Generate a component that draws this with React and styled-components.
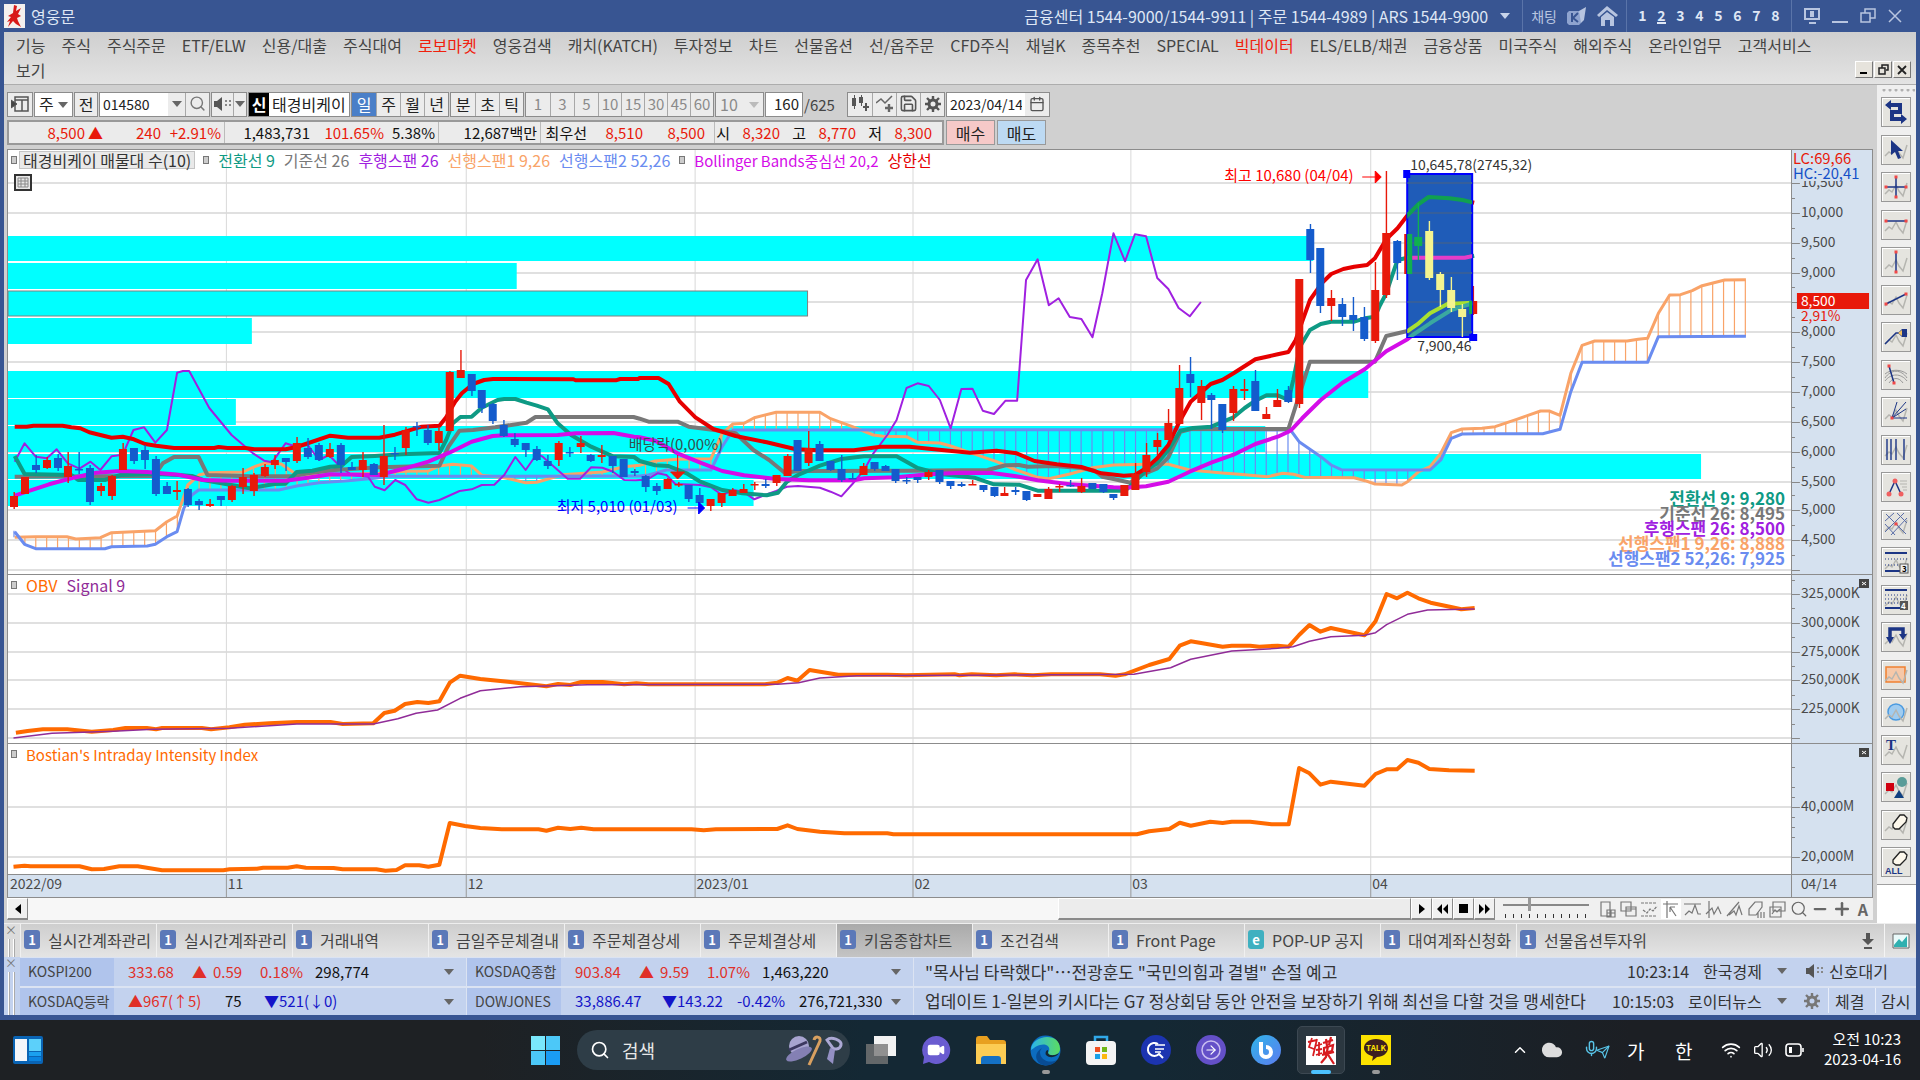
import styled, { createGlobalStyle } from "styled-components"
import { Search, Settings, Save, Calendar, Wifi, Volume2, ChevronUp, Send, Mic, Cloud, Video, ArrowRight, Minus, Plus } from "lucide-react"

const GlobalStyle = createGlobalStyle`
    *{
        box-sizing: border-box;
    }
    body{
        margin: 0;
        background: #385592;
        font-family: "Noto Sans CJK KR", sans-serif;
        font-size: 16px;
        line-height: 1;
        color: #222;
        white-space: nowrap;
    }
    button, input, select{
        font: inherit;
        color: inherit;
        margin: 0;
        padding: 0;
        border: 0;
        border-radius: 0;
        background: none;
        appearance: none;
    }
    a{
        color: inherit;
        text-decoration: none;
    }
    svg{
        display: block;
        flex: none;
    }
`
const Screen = styled.div`
    min-height: 100vh;
    display: flex;
    flex-direction: column;
    overflow: hidden;
`
const AppWindow = styled.div`
    flex: 1;
    display: flex;
    flex-direction: column;
    border: solid #385592;
    border-width: 0 4px 5px;
`

/* title bar */
const TitleBar = styled.header`
    display: flex;
    align-items: center;
    height: 32px;
    padding: 0 2px 0 0;
    background: #385592;
    color: #dfe7f5;
`
const AppName = styled.h1`
    margin: 0;
    padding-left: 6px;
    font-size: 16px;
    font-weight: 400;
    flex: 1;
`
const TitleGroup = styled.div`
    display: flex;
    align-items: center;
    gap: ${p => p.$gap || 12}px;
    height: 32px;
    padding: 0 ${p => p.$pad || 12}px;
    border-left: 1px solid ${p => p.$plain ? "transparent" : "#5a74a9"};
    color: ${p => p.$dim ? "#b8c5e0" : "#dfe7f5"};
    font-size: ${p => p.$small ? 14 : 16}px;
`
const ScreenNo = styled.button`
    width: 9px;
    font-size: 14px;
    font-weight: 700;
    border-bottom: 2px solid ${p => p.$on ? "#dfe7f5" : "transparent"};
`

/* menu */
const MenuBar = styled.nav`
    height: 53px;
    background: linear-gradient(#cfcfcf, #e3e3e3);
    border-bottom: 1px solid #adadad;
    padding: 5px 5px 0 12px;
    color: #444;
`
const MenuLine = styled.div`
    display: flex;
    align-items: center;
    gap: 16px;
    height: ${p => p.$last ? 21 : 16}px;
    & + &{
        margin-top: 6px;
    }
`
const MenuLink = styled.a`
    color: ${p => p.$hot ? "#f0200c" : "#444"};
`
const MdiButtons = styled.div`
    display: flex;
    margin-left: auto;
    gap: 1px;
`
const MdiButton = styled.button`
    width: 18px;
    height: 17px;
    display: grid;
    place-items: center;
    background: #e6e3dc;
    border: 1px solid;
    border-color: #fff #777 #777 #fff;
`

/* work area */
const Work = styled.div`
    display: flex;
    height: 838px;
    background: #d0d0d0;
`
const Main = styled.main`
    flex: 1;
    min-width: 0;
    display: flex;
    flex-direction: column;
    padding-left: 3px;
`
const Bar = styled.div`
    display: flex;
    align-items: stretch;
    height: 25px;
    margin-top: ${p => p.$top}px;
    gap: ${p => p.$gap || 1}px;
`
const Group = styled.div`
    display: flex;
    border: 1px solid #8c8c8c;
    background: #ececec;
`
const ToolButton = styled.button`
    display: grid;
    place-items: center;
    width: ${p => p.$w || 24}px;
    padding-bottom: 2px;
    background: ${p => p.$on ? "#4a7fc8" : "#ececec"};
    color: ${p => p.$on ? "#fff" : p.$off ? "#8a8a8a" : "#222"};
    font-size: ${p => p.$off ? 15 : 16}px;
    & + &{
        border-left: 1px solid #a8a8a8;
    }
`
const Field = styled.input`
    width: ${p => p.$w}px;
    background: #fff;
    padding: 0 3px 2px;
    font-size: ${p => p.$small ? 14 : 15}px;
    text-align: ${p => p.$right ? "right" : "left"};
`
const Pick = styled.select`
    width: ${p => p.$w}px;
    padding: 0 4px 2px;
    background: ${p => p.$off ? "#ececec" : "#fff"};
    color: ${p => p.$off ? "#8a8a8a" : "#222"};
`
const PickWrap = styled.span`
    position: relative;
    display: flex;
    &>svg{
        position: absolute;
        right: 4px;
        top: 9px;
    }
`
const Badge = styled.span`
    display: grid;
    place-items: center;
    width: 20px;
    padding-bottom: 2px;
    background: #000;
    color: #fff;
    font-weight: 700;
`
const StockName = styled.span`
    display: flex;
    align-items: center;
    width: 80px;
    padding: 0 0 2px 3px;
    background: #fff;
    overflow: hidden;
`
const Total = styled.span`
    align-self: center;
    width: 42px;
    font-size: 15px;
    color: #444;
`
const QuoteBox = styled.div`
    display: flex;
    width: 937px;
    border: 2px solid #999;
    background: #ebebeb;
    font-size: 15px;
`
const QuoteCell = styled.div`
    display: flex;
    align-items: center;
    justify-content: flex-end;
    width: ${p => p.$w}px;
    padding-right: ${p => p.$pr || 3}px;
    & + &{
        border-left: 1px solid #bbb;
    }
`
const Num = styled.span`
    width: ${p => p.$w}px;
    text-align: right;
    color: ${p => p.$c || "#111"};
`
const OrderButton = styled.button`
    width: 49px;
    background: ${p => p.$sell ? "#bddaf3" : "#f6c9c8"};
    border: 1px solid #999;
`

/* chart */
const ChartFrame = styled.section`
    margin: 4px 4px 0 0;
    border: 1px solid #8c8c8c;
    background: #fff;
`
const Pane = styled.div`
    position: relative;
    display: flex;
    height: ${p => p.$h}px;
    & + &{
        border-top: 1px solid #8c8c8c;
    }
`
const Plot = styled.svg`
    flex: 1;
    min-width: 0;
    height: 100%;
    overflow: visible;
`
const Axis = styled.svg`
    width: 81px;
    height: 100%;
    overflow: visible;
    background: #d5e1ef;
    border-left: 1px solid #8c8c8c;
    font-size: 14px;
    fill: #4a4a4a;
`
const Legend = styled.div`
    position: absolute;
    left: 3px;
    top: 1px;
    height: 18px;
    display: flex;
    align-items: center;
    gap: 9px;
`
const LegendItem = styled.span`
    color: ${p => p.$c};
    font-size: ${p => p.$small ? 15 : 16}px;
    padding: ${p => p.$boxed ? "0 3px" : 0};
    margin-left: ${p => p.$boxed ? -6 : 0}px;
    background: ${p => p.$boxed ? "#e9e9e9" : "none"};
    box-shadow: ${p => p.$boxed ? "0 0 0 1px #c4c4c4" : "none"};
`
const Dot = styled.i`
    width: 6px;
    height: 8px;
    border: 1px solid #777;
    background: #ccc;
`
const GridToggle = styled.button`
    position: absolute;
    left: 6px;
    top: 24px;
    width: 18px;
    height: 17px;
    border: 2px solid #333;
    background: #e8e8e8;
    padding: 1px;
`
const ClosePane = styled.button`
    position: absolute;
    right: 3px;
    top: 4px;
    width: 10px;
    height: 9px;
    background: #444;
`
const DateRow = styled(Pane)`
    background: #d5e1ef;
    font-size: 14px;
`

/* scroll row */
const ScrollRow = styled.div`
    display: flex;
    height: 22px;
    margin-right: 4px;
    background: #f0f0f0;
`
const Track = styled.div`
    flex: 1;
    display: flex;
    justify-content: flex-end;
    background: #f7f7f7;
`
const Thumb = styled.div`
    width: 353px;
    background: #ececec;
    border: 1px solid;
    border-color: #fff #8a8a8a #8a8a8a #fff;
    border-bottom-width: 2px;
`
const PlayButton = styled.button`
    width: 21px;
    display: grid;
    place-items: center;
    background: #f0f0f0;
    border: 1px solid;
    border-color: #fff #8a8a8a #8a8a8a #fff;
    border-bottom-width: 2px;
`
const Speed = styled.input.attrs({ type: "range" })`
    width: 86px;
    height: 20px;
    margin: 0 8px;
    background: linear-gradient(#888, #888) no-repeat 0 6px / 100% 2px,
        repeating-linear-gradient(90deg, #333 0 1px, transparent 1px 8px) no-repeat 2px 16px / 100% 4px;
    &::-webkit-slider-thumb{
        appearance: none;
        width: 3px;
        height: 13px;
        margin-top: -7px;
        background: #999;
    }
`
const ChartTools = styled.div`
    display: flex;
    align-items: center;
    justify-content: space-between;
    width: 276px;
    color: #666;
`
const ChartTool = styled.button`
    display: grid;
    place-items: center;
    width: 20px;
    height: 20px;
    font-weight: 700;
    background: ${p => p.$on ? "#fff" : "none"};
`

/* drawing palette */
const Palette = styled.aside`
    width: 39px;
    background: linear-gradient(#efefef 799px, #a0a0a0 799px 800px, #fff 800px);
    padding: 4px 0 0 4px;
`
const Grip = styled.div`
    height: 8px;
    width: 34px;
    background: radial-gradient(circle, #b0b0b0 1px, transparent 2px) 0 -2px / 6px 6px repeat-x;
`
const PaletteGrid = styled.div`
    display: grid;
    grid-template-rows: repeat(21, 1fr);
    height: 788px;
`
const PaletteButton = styled.button`
    width: 30px;
    height: 30px;
    display: grid;
    place-items: center;
    background: #e5e4df;
    border: 1px solid #999;
    box-shadow: inset 1px 1px #fff;
`

/* tabs */
const TabBar = styled.nav`
    display: flex;
    height: 34px;
    background: linear-gradient(#cecece, #e4e4e4);
    border-top: 1px solid #eee;
`
const CloseStrip = styled.div`
    width: 16px;
    height: 100%;
    padding: 0 1px;
    color: #777;
    font-size: 12px;
    background: linear-gradient(90deg, #fff 1px, #aaa 1px 2px, transparent 2px 5px, #fff 5px 6px, #aaa 6px) no-repeat 4px 15px / 7px 100%, ${p => p.$blue ? "#c3d2ee" : "#dcdcdc"};
`
const Tab = styled.a`
    display: flex;
    align-items: center;
    gap: 8px;
    width: 136px;
    padding: 0 0 2px 3px;
    overflow: hidden;
    color: #444;
    border-left: 1px solid #f0f0f0;
    background: ${p => p.$on ? "linear-gradient(#aaa, #c4c4c4)" : "none"};
`
const TabNo = styled.b`
    flex: none;
    display: grid;
    place-items: center;
    width: 16px;
    height: 19px;
    border-radius: 3px;
    color: #fff;
    font-size: 13px;
    background: ${p => p.$web ? "#3fb0c0" : "#5b78b8"};
`
const TabEnd = styled.div`
    margin-left: auto;
    display: flex;
    align-items: center;
`
const TabEndButton = styled.button`
    width: 32px;
    height: 100%;
    display: grid;
    place-items: center;
    border-left: ${p => p.$line ? 1 : 0}px solid #f4f4f4;
`

/* tickers */
const Tickers = styled.div`
    display: flex;
    height: 58px;
    background: #dbe3f2;
`
const TickerRows = styled.div`
    flex: 1;
    display: grid;
    grid-template-rows: 28px 27px;
    gap: 2px;
    padding-top: 1px;
`
const TickerRow = styled.div`
    display: grid;
    grid-template-columns: 446px 446px minmax(0, 1fr);
    gap: 1px;
`
const Quote = styled.div`
    display: flex;
    align-items: center;
    background: #c3d2ee;
    font-size: 15px;
    padding-right: 12px;
`
const TickerName = styled.span`
    width: 94px;
    height: 100%;
    display: flex;
    align-items: center;
    padding: 0 0 2px 8px;
    margin-right: 14px;
    background: #b0c4ec;
    color: #444;
    font-size: 14px;
`
const Value = styled.span`
    width: ${p => p.$w}px;
    padding-bottom: 2px;
    color: ${p => p.$c || "#111"};
`
const DropArrow = styled.button`
    margin-left: auto;
    padding: 4px 0;
`
const News = styled.div`
    display: flex;
    align-items: center;
    background: #c3d2ee;
    color: #333;
    padding: 0 0 2px 11px;
`
const Headline = styled.a`
    flex: 1;
    min-width: 0;
    font-size: 17px;
`
const NewsCell = styled.span`
    display: flex;
    align-items: center;
    gap: 5px;
    height: 100%;
    width: ${p => p.$w}px;
    padding-left: ${p => p.$pad || 0}px;
    border-left: ${p => p.$line ? 1 : 0}px solid #e8eefa;
`

/* windows taskbar */
const Taskbar = styled.footer`
    display: grid;
    grid-template-columns: 530px minmax(0, 1fr) auto;
    align-items: center;
    height: 60px;
    padding: 0 19px 0 0;
    background: linear-gradient(90deg, #1e2124 0 25%, #142834 45%, #142834 60%, #1c1f24 85%);
    color: #fff;
`
const TaskIcons = styled.div`
    display: flex;
    align-items: center;
`
const TaskButton = styled.button`
    position: relative;
    width: ${p => p.$w || 55}px;
    height: 48px;
    display: grid;
    place-items: center;
    &::after{
        content: "";
        position: absolute;
        bottom: 0;
        left: calc(50% - ${p => p.$on ? 10 : 4}px);
        width: ${p => p.$on ? 20 : p.$run ? 8 : 0}px;
        height: 4px;
        border-radius: 2px;
        background: ${p => p.$on ? "#4cc2ff" : "#999"};
    }
`
const ActiveTile = styled.span`
    display: grid;
    place-items: center;
    width: 48px;
    height: 48px;
    border-radius: 5px;
    border: 1px solid #3c4852;
    background: #2b3740;
`
const SearchPill = styled.label`
    display: flex;
    align-items: center;
    gap: 12px;
    width: 273px;
    height: 40px;
    margin: 0 3px 0 17px;
    padding: 0 5px 0 13px;
    border-radius: 20px;
    background: #2e3d47;
    &>input{
        flex: 1;
        min-width: 0;
        font-size: 18px;
    }
    &>input::placeholder{
        color: #e8e8e8;
    }
`
const Tray = styled.div`
    display: flex;
    align-items: center;
    gap: 12px;
`
const TrayText = styled.span`
    width: ${p => p.$w}px;
    font-size: 19px;
`
const Clock = styled.div`
    width: 84px;
    padding-bottom: 3px;
    text-align: right;
    font-size: 15px;
    line-height: 20px;
`

const RED = "#e8190a"
const BLUE = "#145bcc"

const Down = ({ c = "#666" }) => <svg width="10" height="6"><path d="M0 0h10l-5 6z" fill={c} /></svg>

// crossed points are dropped so that overlapping stretches join into one line
const join = (...parts) => {
    const out = []
    parts.forEach(([x0, y0, k, text]) => {
        text.split(" ").forEach((pair) => {
            const [a, b] = pair.split(",").map(Number)
            const x = x0 + a / k
            if (!out.length || x > out[out.length - 1][0]) out.push([x, y0 + b / 3])
        })
    })
    return out
}
const left = (t) => [0, 180, 2.24, t]
const mid = (t) => [640, 180, 2.24, t]
const right = (t) => [1240, 140, 2.306, t]
const lowA = (t) => [0, 560, 1.6333, t]
const lowB = (t) => [960, 560, 1.6333, t]

const upper = join(
    left("33,740 60,740 75,737 140,737 160,742 180,745 200,757 250,773 275,770 300,778 325,792 350,797 390,804 480,804 490,801 510,804 550,804 570,808 640,808 665,801 740,767 780,773 850,773 885,764 915,752 945,740 985,737 1000,712 1020,665 1035,640 1060,612 1085,600 1105,597 1285,598 1290,601 1380,601 1390,597 1430,597"),
    mid("0,594 42,594 65,612 90,665 125,712 165,747 215,768 285,787 350,808 400,811 480,811 540,800 605,800 660,808 740,818 800,812 845,820 885,843 935,853 990,861 1035,880 1085,887 1110,885 1135,865 1160,835 1185,795 1208,730 1235,665 1280,612 1306,600 1331,580 1380,538 1430,523 1454,516"),
    right("130,600 145,545 163,480 190,430 212,402 240,387 265,380 295,375 313,355 339,298 365,265 388,226 414,192 437,171 485,175 515,180 542,188")
)
const base = join(
    left("33,890 345,888 365,850 390,831 445,831 465,885 560,889 655,889 690,880 750,870 850,862 985,857 1005,800 1030,752 1060,750 1110,742 1180,728 1200,711 1420,711"),
    mid("0,716 20,725 85,725 110,740 180,752 215,760 255,810 290,840 325,878 355,873 600,872 780,870 820,856 850,855 870,860 930,858 990,864 1020,872 1037,890 1062,897 1100,908 1125,885 1160,865 1185,832 1212,755 1235,747 1454,747"),
    right("163,665 313,665 339,588 388,573 414,550 440,520 480,492 538,488")
)
const turn = join(
    left("33,828 55,882 160,885 175,900 235,900 270,885 350,882 400,885 430,888 455,900 560,925 615,912 640,911 665,876 700,872 740,860 765,858 788,831 840,828 900,823 985,819 1000,780 1015,730 1032,711 1057,710 1080,683 1115,660 1130,657 1155,657 1180,668 1203,677 1228,688 1250,730 1280,765 1325,800 1374,829 1421,831"),
    mid("0,843 35,856 65,858 105,880 136,905 185,930 230,940 285,946 310,938 330,905 355,885 404,857 452,837 503,829 576,829 623,864 673,882 721,889 750,893 794,913 850,914 892,932 1088,932 1110,905 1135,870 1160,850 1185,810 1212,752 1240,744 1281,740 1331,712 1356,684 1380,662 1405,646 1430,646 1454,660 1465,600 1480,500"),
    right("163,570 188,552 212,545 265,545 290,535 313,530 325,495 339,460 352,410 365,360 388,353 520,353 542,347")
)
const center = join(
    left("33,947 60,935 110,913 160,895 215,878 270,873 330,876 400,884 455,900 520,902 640,902 690,893 740,883 850,885 900,868 960,845 1007,818 1057,785 1104,768 1130,766 1250,765 1290,760 1375,759 1421,770"),
    mid("0,772 35,782 85,820 136,848 185,873 234,886 306,897 380,901 480,901 503,895 576,892 648,883 720,878 790,879 844,889 892,901 964,913 1015,917 1062,922 1088,923 1135,919 1185,905 1233,875 1281,848 1331,824 1380,792 1430,770 1454,755"),
    right("120,870 145,835 188,780 238,728 290,687 339,634 388,598 400,585 440,550 489,510 538,490")
)
const lagging = join(
    left("33,845 55,790 80,830 105,835 127,808 152,850 178,866 203,845 225,870 250,829 275,824 299,750 323,742 348,788 374,750 397,578 410,573 424,573 469,684 519,765 567,820 592,842 610,847 640,790 665,800 690,795 715,840 737,825 763,860 788,885 825,890 840,920 862,931 886,900 908,915 934,958 960,968 985,960 1030,933 1057,928 1080,915 1108,914 1130,885 1155,831 1178,870 1203,822 1215,829 1250,870 1272,896 1300,896 1325,862 1350,863 1374,875 1399,900 1425,901"),
    mid("0,900 15,900 40,880 60,885 80,912 136,915 160,922 185,945 210,930 232,935 257,958 281,945 306,933 330,920 355,918 404,923 428,935 452,949 477,912 503,870 524,820 555,765 576,720 598,624 623,610 648,618 673,660 697,745 721,627 746,626 769,692 794,702 820,662 846,662 866,300 892,238 917,376 939,355 964,411 990,417 1015,472 1037,340 1062,160 1088,244 1110,163 1135,169 1160,294 1185,327 1208,384 1233,409 1258,366")
)
const lead1 = join(
    left("33,1072 80,1070 150,1070 170,1077 225,1073 250,1058 348,1052 374,1025 397,1008 421,915 447,884 469,878 545,876 567,862 592,850 630,852 650,870 665,885 740,885 850,880 908,874 960,873 985,858 1015,853 1057,858 1080,886 1130,893 1178,908 1203,907 1228,897 1260,884 1350,876 1399,860"),
    mid("0,856 35,843 85,838 160,836 185,760 209,732 234,730 257,713 306,697 404,697 428,716 477,740 524,765 545,769 598,770 623,787 673,789 697,798 746,820 800,845 844,870 892,892 917,896 964,882 1015,863 1062,855 1160,852 1185,853 1233,870 1306,879"),
    right("0,1003 65,1010 100,1000 125,1003 150,1012 265,1013 290,1022 313,1032 375,1035 388,1025 414,995 440,980 465,940 489,878 514,867 560,865 590,860 640,838 695,813 715,813 740,826 765,700 791,616 820,603 895,603 920,598 942,595 967,520 993,465 1018,464 1045,452 1068,437 1120,420 1169,419")
)
const lead2 = join(
    left("33,1055 55,1093 80,1106 235,1106 250,1100 330,1098 348,1093 374,1070 397,1055 412,985 430,945 445,930 625,930 665,918 715,908 780,902 840,895 870,889 1430,888"),
    mid("0,888 20,885 60,870 160,870 185,800 209,750 1340,749"),
    right("118,870 138,905 188,950 212,975 235,989 440,990 465,960 489,895 514,882 560,881 700,881 740,868 765,755 791,667 942,667 967,590 1169,589")
)
const obv = join(
    lowA("26,518 45,513 70,508 110,508 150,515 185,510 205,504 240,504 255,508 265,504 330,504 345,508 375,502 400,494 440,490 485,486 540,486 560,492 610,490 628,459 645,452 662,432 682,426 700,429 718,424 735,368 752,347 785,357 830,365 893,379 912,372 932,375 950,366 985,366 1020,373 1040,370 1060,373 1250,373 1270,368 1287,354 1303,362 1323,330 1370,344 1450,344 1480,346 1560,343"),
    lowB("0,346 20,343 60,346 90,343 120,346 150,343 230,343 255,347 270,343 310,315 343,297 360,257 378,244 395,249 430,260 445,257 475,257 490,260 520,257 538,260 555,225 572,195 590,215 607,204 662,226 680,184 698,102 715,115 732,98 750,115 770,128 805,142 820,148 842,144")
)
const signal = join(
    lowA("22,534 85,520 185,514 250,508 375,505 485,492 610,492 650,476 680,460 715,450 752,415 785,392 850,380 960,374 1270,373 1305,368 1340,354 1400,347 1560,346"),
    lowB("0,346 285,343 345,323 378,298 445,273 520,265 545,260 572,244 607,230 662,226 680,218 698,194 732,163 765,150 842,147")
)
const intensity = join(
    lowA("22,920 40,917 50,919 130,919 150,928 170,927 195,919 225,919 265,931 365,931 375,928 420,926 430,923 470,923 485,919 500,923 545,924 560,928 615,928 630,932 648,930 662,916 685,916 700,920 718,914 735,789 760,798 785,804 820,808 880,808 893,812 912,803 932,807 950,803 970,808 1130,808 1150,811 1170,808 1270,807 1287,796 1303,807 1340,815 1380,820 1450,820 1460,823 1560,823"),
    lowB("0,823 290,823 310,814 343,807 360,788 378,797 410,785 430,789 445,785 475,785 510,793 538,793 555,624 572,640 590,674 607,665 662,677 680,642 698,628 715,628 732,600 750,608 768,627 800,631 842,632")
)

const at = (pts, x) => {
    for (let i = 1; i < pts.length; i++) {
        const [x1, y1] = pts[i - 1]
        const [x2, y2] = pts[i]
        if (x <= x2) return y1 + (y2 - y1) * (x - x1) / (x2 - x1)
    }
    return pts[pts.length - 1][1]
}
const slotX = (i) => 14 + i * 10.895

// high, body top, body bottom, low; r = up day, b = down day
const candles = `492 496 507 509r,477 477 494 494r,455 465 470 473b,457 460 468 469r,454 458 468 471b,452 466 477 483r,452 469 470 474b,465 468 502 505b,483 486 491 496r,475 476 496 500r,443 449 470 470r,448 448 461 464b,445 450 460 469b,456 459 494 496b,482 486 494 494b,481 490 492 500r,488 489 505 507b,499 501 505 510b,499 504 506 507r,496 496 500 506b,485 486 500 502r,468 477 487 494r,473 475 491 496r,464 467 476 477r,455 460 465 469r,458 458 462 471b,437 443 461 463r,438 448 457 459b,443 445 460 461b,443 449 457 458r,443 445 465 473b,462 467 470 470b,452 460 470 477r,463 464 475 475b,425 456 477 485r,447 453 454 460b,427 430 448 455r,422 426 427 436b,425 430 443 445b,428 431 443 450r,371 372 431 431r,350 370 378 378r,374 374 391 396b,390 390 408 413b,403 404 421 424b,420 425 436 437b,433 439 445 447b,443 443 450 457b,446 449 460 461b,455 461 466 469b,441 443 460 466r,447 452 453 457b,436 443 447 453r,454 455 461 462b,445 455 457 463r,456 456 466 473b,459 459 477 477b,469 471 473 476b,475 476 487 492b,483 486 491 495b,478 479 489 489r,482 484 485 487r,485 485 499 502b,488 495 503 503b,499 499 506 511r,493 493 503 507r,488 490 496 496r,484 489 493 493r,482 484 485 490r,479 484 486 488b,475 475 483 486r,454 456 476 476r,440 440 471 471b,431 448 463 466r,441 444 461 461b,461 461 470 471b,455 469 480 482b,473 478 479 479b,463 466 475 475r,462 462 469 471b,465 466 471 471b,469 469 481 483b,477 480 481 484b,477 477 480 483b,470 472 477 480r,470 470 482 484b,481 481 486 489b,482 484 486 487b,480 484 485 485r,485 485 490 492b,487 487 496 497b,487 493 496 496r,487 490 492 495b,491 491 500 501b,494 494 497 497r,487 489 499 499r,484 486 487 492r,480 485 486 487b,478 486 492 493r,483 483 489 489b,484 484 492 493b,494 494 498 500b,485 485 496 496r,463 474 490 490r,443 455 472 477r,433 440 447 455r,409 423 440 440r,365 388 424 424r,357 374 383 397b,380 386 403 420r,393 395 400 429b,404 404 430 433b,386 389 413 421r,379 389 391 400r,370 381 411 411b,407 414 419 419r,389 400 407 407r,386 390 402 403b,279 279 404 408r,224 229 260 273b,248 248 306 313b,290 298 306 321r,298 304 317 326b,297 315 320 331b,307 317 339 341b,262 290 341 343r,171 233 295 298r,240 241 263 280b,234 234 274 274r,203 237 246 260r,221 231 278 280b,272 274 290 307b,277 290 308 312b,304 309 317 337b,286 301 314 315r`
    .split(",").map((c, i) => ({ i, up: c.endsWith("r"), v: c.slice(0, -1).split(" ").map(Number) }))

const Line = ({ pts, c, w = 4 }) => (
    <polyline points={pts.map(p => p.map(n => n.toFixed(1)).join(",")).join(" ")} fill="none" stroke={c} strokeWidth={w} strokeLinejoin="round" />
)
const Candles = ({ up, down, from = 0 }) => candles.slice(from).map(({ i, up: rise, v }) => {
    const x = Math.round(slotX(i))
    const c = rise ? up : down
    return (
        <g key={i} fill={c}>
            <rect x={x - 0.5} y={v[0]} width="1.4" height={v[3] - v[0]} />
            <rect x={x - 4} y={v[1]} width="8" height={Math.max(v[2] - v[1], 1.5)} />
        </g>
    )
})

const months = [[226, "11"], [466, "12"], [695, "2023/01"], [913, "02"], [1131, "03"], [1371, "04"]]
const Months = ({ top, bottom, c = "#d9d9d9" }) => months.map(([x]) => (
    <rect key={x} x={x} y={top} width="1" height={bottom - top} fill={c} />
))
const Rules = ({ ys }) => ys.map(y => <rect key={y} x="8" y={y - 1} width="1784" height="2" fill="#e0e0e0" />)

const volumes = [[236, 25, 1314], [263, 26, 517], [291, 25, 808, 1], [318, 26, 252], [371, 27, 1369], [399, 26, 236], [426, 26, 1266], [454, 25, 1702], [480, 26, 754]]
const priceRows = [183, 213, 243, 273, 302, 332, 362, 392, 422, 452, 482, 510, 540, 570]
const prices = ["10,500", "10,000", "9,500", "9,000", "", "8,000", "7,500", "7,000", "6,500", "6,000", "5,500", "5,000", "4,500"]
const readouts = [["#0e9a84", "전환선 9: 9,280"], ["#787878", "기준선 26: 8,495"], ["#a020e0", "후행스팬 26: 8,500"], ["#f9a368", "선행스팬1 9,26: 8,888"], ["#6a8cf0", "선행스팬2 52,26: 7,925"]]

const PricePlot = () => (
    <Plot viewBox="8 150 1784 424" preserveAspectRatio="none">
        <defs>
            <clipPath id="picked"><rect x="1408" y="174" width="65" height="163" /></clipPath>
        </defs>
        <Rules ys={priceRows} />
        <Months top={150} bottom={574} />
        {volumes.map(([y, h, x, edge]) => (
            <rect key={y} x="8" y={y} width={x - 8} height={h} fill="#00ffff" stroke={edge ? "#808080" : "none"} />
        ))}
        {Array.from({ length: 160 }, (_, i) => {
            const x = slotX(i)
            const a = at(lead1, x)
            const b = at(lead2, x)
            return <path key={i} d={`M${x} ${a}V${b}`} stroke={a < b ? "#f9a368" : "#6a8cf0"} strokeWidth="1.2" />
        })}
        <Line pts={lead1} c="#f9a368" w={3} />
        <Line pts={lead2} c="#6a8cf0" w={3} />
        <Line pts={lagging} c="#a020e0" w={2} />
        <Line pts={base} c="#787878" />
        <Line pts={turn} c="#0e9a84" />
        <Line pts={center} c="#d40ce8" />
        <Line pts={upper} c="#e60000" />
        <Candles up={RED} down={BLUE} />

        <rect x="1408" y="174" width="65" height="163" fill="#1f5cb8" stroke="#0000ff" strokeWidth="2" />
        <g clipPath="url(#picked)">
            <path d="M1408 183h65M1408 213h65M1408 243h65M1408 273h65M1408 302h65M1408 332h65" stroke="#355f9c" strokeWidth="2" />
            <Line pts={base} c="#a8e030" />
            <Line pts={turn} c="#e63cc8" />
            <Line pts={center} c="#3aa8a0" />
            <Line pts={upper} c="#10a050" />
            <Candles up="#10b050" down="#f4f490" from={128} />
        </g>
        <path d="M1404 170h7v8h-7zM1470 334h8v7h-8z" fill="#0000ff" />

        <g fontSize="15">
            <text x="1225" y="181" fill="#ff0000">최고 10,680 (04/04)</text>
            <path d="M1363 177h13M1376 171v12l6-6z" stroke="#ff0000" fill="#ff0000" />
            <text x="557" y="512" fill="#0000ff">최저 5,010 (01/03)</text>
            <path d="M688 508h12M699 502v12l6-6z" stroke="#0000ff" fill="#0000ff" />
            <text x="629" y="450" fill="#35504e">배당락(0,00%)</text>
            <path d="M678 455v18M671 472h14l-7 7z" stroke={RED} fill={RED} />
        </g>
        <g fontSize="14" fill="#333">
            <text x="1411" y="170">10,645,78(2745,32)</text>
            <text x="1418" y="351">7,900,46</text>
        </g>
        <g fontSize="17" fontWeight="700" textAnchor="end">
            {readouts.map(([c, t], i) => <text key={t} x="1786" y={505 + i * 15} fill={c}>{t}</text>)}
        </g>
    </Plot>
)

const Ticks = ({ ys, minor }) => (
    <g fill="#888">
        {ys.map(y => <rect key={y} x="1792" y={y} width="8" height="1" />)}
        {minor.map(y => <rect key={y} x="1792" y={y} width="3" height="1" />)}
    </g>
)

const s = "#b5b5b0"
const navy = "#1c3585"
const Wave = () => <path d="M1 19l4-4 3 2 4-7 3 6 4 5 4-13" stroke={s} fill="none" strokeWidth="1.5" />
const Ends = ({ pts }) => pts.map(([x, y]) => <rect key={x + "-" + y} x={x - 1.5} y={y - 1.5} width="3" height="3" fill="#f04848" />)
const paletteIcons = [
    ["전환", <path d="M5 5h11v7H8v7h10" stroke={navy} strokeWidth="4" fill="none" key="a" />, <path d="M1 5l6-5v10zM23 19l-6-5v10z" fill={navy} key="b" />],
    ["선택", <Wave key="w" />, <path d="M7 3v15l4-3 3 7 3-1-3-7h5z" fill={navy} key="a" />],
    ["십자선", <Wave key="w" />, <path d="M2 12h20M12 2v20" stroke={navy} strokeWidth="1.5" key="a" />, <Ends key="e" pts={[[2, 12], [22, 12], [12, 2], [12, 22]]} />],
    ["수평선", <Wave key="w" />, <path d="M2 9h20" stroke={navy} strokeWidth="1.5" key="a" />, <Ends key="e" pts={[[2, 9], [22, 9]]} />],
    ["수직선", <Wave key="w" />, <path d="M12 2v20" stroke={navy} strokeWidth="1.5" key="a" />, <Ends key="e" pts={[[12, 2], [12, 22]]} />],
    ["추세선", <Wave key="w" />, <path d="M2 17L22 7" stroke={navy} strokeWidth="1.5" key="a" />, <Ends key="e" pts={[[2, 17], [22, 7]]} />],
    ["펜", <Wave key="w" />, <path d="M1 19L12 8h4" stroke={navy} strokeWidth="1.5" fill="none" key="a" />, <path d="M14 8l4-4h5v8h-5z" fill={navy} key="b" />, <path d="M14 8l4-3v6z" fill="#f0c060" key="c" />],
    ["원호", <path d="M1 16c6-9 16-9 22 0M1 19c6-8 16-8 22 0M5 21c4-6 10-6 14 0M1 12c6-5 16-5 22 0" stroke="#999" fill="none" key="w" />, <path d="M5 4l5 17" stroke={navy} strokeWidth="1.5" key="a" />, <Ends key="e" pts={[[5, 4], [10, 21]]} />],
    ["부채선", <Wave key="w" />, <path d="M8 18L13 2M8 18L22 2M8 18l14-9M8 18h15" stroke={navy} key="a" />, <Ends key="e" pts={[[8, 18]]} />],
    ["시간대", <Wave key="w" />, <path d="M3 2v21M7 2v21M12 2v21M20 2v21" stroke={navy} strokeWidth="1.4" key="a" />],
    ["파동", <path d="M5 19l6-13 6 13" stroke={navy} strokeWidth="1.5" fill="none" key="a" />, <path d="M16 6h7M16 9h7M18 12h5M19 15h4" stroke={s} key="w" />, <g fill="#f06060" key="b"><circle cx="5" cy="19" r="2.5" /><circle cx="11" cy="6" r="2.5" /><circle cx="17" cy="19" r="2.5" /></g>],
    ["격자", <Wave key="w" />, <path d="M1 9l9-8M1 20L20 1M7 23L23 6M2 2l20 20M13 1l10 10M1 12l10 11" stroke="#5a6ea8" key="a" />, <Ends key="e" pts={[[12, 12]]} />],
    ["3분할", <Wave key="w" />, <path d="M1 3h22M1 21h15" stroke={navy} strokeWidth="2" key="a" />, <path d="M1 9h22M1 15h15" stroke={navy} strokeDasharray="1 2" key="b" />, <g key="c"><rect x="16" y="14" width="8" height="9" fill="#eee" stroke="#555" /><text x="18" y="22" fontSize="8" fontWeight="700">3</text></g>],
    ["4분할", <Wave key="w" />, <path d="M1 3h22M1 21h15" stroke={navy} strokeWidth="2" key="a" />, <path d="M1 8h22M1 12h22M1 16h15" stroke={navy} strokeDasharray="1 2" key="b" />, <g key="c"><rect x="16" y="14" width="8" height="9" fill="#555" /><text x="17" y="22" fontSize="8" fontWeight="700" fill="#fff">4</text></g>],
    ["되돌리기", <Wave key="w" />, <path d="M6 14V4h13v8" stroke={navy} strokeWidth="3.5" fill="none" key="a" />, <path d="M2 12h8l-4 7zM15 9h8l-4 6z" fill={navy} key="b" />],
    ["사각형", <rect x="2" y="5" width="19" height="15" fill="#f6c8a8" stroke="#f08030" strokeWidth="1.5" key="a" />, <Wave key="w" />],
    ["원", <circle cx="12" cy="12" r="8" fill="#a0ccf0" stroke="#4a9ae0" strokeWidth="1.5" key="a" />, <Wave key="w" />],
    ["문자", <Wave key="w" />, <text x="2" y="13" fontFamily="Liberation Serif" fontSize="15" fontWeight="700" fill={navy} key="a">T</text>],
    ["도형", <Wave key="w" />, <path d="M2 8h8v8H2z" fill="#d00010" key="a" />, <circle cx="18" cy="7" r="5" fill="#5a9c98" key="b" />, <path d="M15 15l5 8H10z" fill="#104080" key="c" />],
    ["지우개", <Wave key="w" />, <path d="M9 12l7-9h4l3 3-1 4-7 7h-4l-2-2z" fill="#fdf8ec" stroke="#222" strokeWidth="1.3" key="a" />],
    ["모두 지우기", <path d="M9 10l7-8h4l3 3-1 4-6 6h-4l-3-2z" fill="#fdf8ec" stroke="#222" strokeWidth="1.3" key="a" />, <text x="1" y="24" fontFamily="Liberation Sans" fontSize="9" fontWeight="700" fill={navy} key="b">ALL</text>]
]

const bottomTools = [
    ["추가", <path d="M3 2h9v14H3zM9 10h8v7H9zM9 13h8M13 10v7" />],
    ["복사", <path d="M2 2h10v9H2zM7 7h10v9H7zM7 9h10" />],
    ["범위", <path d="M1 3h16M1 16h16M3 10l4 3 3-4 3 2 4-5" strokeDasharray="3 1" />],
    ["기준", <path d="M2 4h15M6 1v17M9 7l6 9M9 7v5M9 7h5" />, 1],
    ["수평", <path d="M1 4h17M2 15l4-4 3 2 3-8 3 9h3" />],
    ["수직", <path d="M5 1v17M2 14l6-6 2 6 4-7 3 7" />],
    ["추세", <path d="M2 16L14 2M4 15l5-4 2 4 3-9 3 9" />],
    ["전체삭제", <path d="M2 9l6-7h7v5l-6 8H2zM11 12v6M14 12v6M17 12v6" />],
    ["겹침", <path d="M5 2h12v9H5zM2 7h11v10H2zM4 14l3-4 2 2 3-3" />],
    ["확대경", <Search size={18} strokeWidth={1.6} />],
    ["축소", <Minus size={18} strokeWidth={3} />],
    ["확대", <Plus size={20} strokeWidth={3} />]
]

const menus = ["기능", "주식", "주식주문", "ETF/ELW", "신용/대출", "주식대여", "로보마켓", "영웅검색", "캐치(KATCH)", "투자정보", "차트", "선물옵션", "선/옵주문", "CFD주식", "채널K", "종목추천", "SPECIAL", "빅데이터", "ELS/ELB/채권", "금융상품", "미국주식", "해외주식", "온라인업무", "고객서비스"]
const tabs = ["실시간계좌관리", "실시간계좌관리", "거래내역", "금일주문체결내", "주문체결상세", "주문체결상세", "키움종합차트", "조건검색", "Front Page", "POP-UP 공지", "대여계좌신청화", "선물옵션투자위"]

const Speaker = () => (
    <svg width="18" height="16" fill="#555"><path d="M0 5h3l5-4v14l-5-4H0z" /><path d="M11 4h2v2h-2zM11 8h2v2h-2zM15 4h2v2h-2zM15 8h2v2h-2z" fill="#888" /></svg>
)
const Gear = ({ c = "#555" }) => (
    <svg width="16" height="16" fill="none" stroke={c}><circle cx="8" cy="8" r="4" strokeWidth="3" /><path d="M8 0v3M8 13v3M0 8h3M13 8h3M2 2l3 3M11 11l3 3M14 2l-3 3M5 11l-3 3" strokeWidth="2.4" /></svg>
)

const Header = () => (
    <>
        <TitleBar>
            <svg width="21" height="24" viewBox="0 0 21 24"><path d="M0 0h21v24H0z" fill="#f4f0ee" /><path d="M10 1l3 1-1 5 5-3-3 6 3 2-4 2 1 3 3 6-5-3-3-3-5 6 2-6-3 1 4-5-3-1 5-3z" fill="#d81818" /></svg>
            <AppName>영웅문</AppName>
            <TitleGroup $plain>금융센터 1544-9000/1544-9911 | 주문 1544-4989 | ARS 1544-9900 <Down c="#c8d4ea" /></TitleGroup>
            <TitleGroup $small $dim $pad={8} $gap={10}>채팅
                <svg width="20" height="20" viewBox="0 0 20 20"><path d="M2 5h10l2 2v10l-2 2H2l-2-2V7z" fill="#8fa4cf" /><path d="M5 7v9M11 7l-5 5 5 4" stroke="#385592" strokeWidth="2" fill="none" /><path d="M12 5l7-4-2 13-3 3z" fill="#b8c5e0" /></svg>
                <svg width="21" height="20" viewBox="0 0 21 20"><path d="M10 0L0 9l2 2 8-7 9 7 2-2zM4 11v9h4v-6h5v6h4v-9l-7-5z" fill="#b8c5e0" /></svg>
            </TitleGroup>
            <TitleGroup $gap={10} $pad={11}>
                {[1, 2, 3, 4, 5, 6, 7, 8].map(n => <ScreenNo key={n} $on={n === 2}>{n}</ScreenNo>)}
            </TitleGroup>
            <TitleGroup $dim>
                <svg width="16" height="16" fill="none" stroke="#b8c5e0" strokeWidth="2"><path d="M1 1h14v10H1zM5 15h7" /><path d="M6 3h4v6H6z" fill="#b8c5e0" stroke="none" /></svg>
                <svg width="16" height="16"><path d="M0 13h16v2H0z" fill="#b8c5e0" /></svg>
                <svg width="16" height="16" fill="none" stroke="#b8c5e0" strokeWidth="1.5"><path d="M5 5V1h10v9h-5M1 5h9v9H1z" /></svg>
                <svg width="14" height="14" stroke="#b8c5e0" strokeWidth="1.5"><path d="M1 1l12 12M13 1L1 13" /></svg>
            </TitleGroup>
        </TitleBar>
        <MenuBar>
            <MenuLine>
                {menus.map(m => <MenuLink href="#" key={m} $hot={m === "로보마켓" || m === "빅데이터"}>{m}</MenuLink>)}
            </MenuLine>
            <MenuLine $last>
                <MenuLink href="#">보기</MenuLink>
                <MdiButtons>
                    <MdiButton aria-label="최소화"><svg width="10" height="10"><path d="M1 7h7v2H1z" /></svg></MdiButton>
                    <MdiButton aria-label="복원"><svg width="11" height="11" fill="none" stroke="#222" strokeWidth="1.5"><path d="M4 4V1h6v5H8M1 4h6v6H1z" /></svg></MdiButton>
                    <MdiButton aria-label="닫기"><svg width="10" height="10" stroke="#222" strokeWidth="1.8"><path d="M1 1l8 8M9 1L1 9" /></svg></MdiButton>
                </MdiButtons>
            </MenuLine>
        </MenuBar>
    </>
)

const Toolbar = () => (
    <>
        <Bar $top={7}>
            <Group><ToolButton aria-label="목록"><svg width="18" height="16" fill="none" stroke="#555"><path d="M4 1h13v14H4zM4 4h13M11 4v11" strokeWidth="1.5" /><path d="M0 4l6 4-6 4z" fill="#444" /></svg></ToolButton></Group>
            <Group>
                <PickWrap><Pick $w={37} aria-label="구분"><option>주</option></Pick><Down /></PickWrap>
            </Group>
            <Group><ToolButton $w={22}>전</ToolButton></Group>
            <Group>
                <Field $w={68} $small defaultValue="014580" aria-label="종목코드" />
                <ToolButton $w={17} aria-label="종목 목록"><Down /></ToolButton>
                <ToolButton aria-label="종목 검색"><Search size={17} color="#777" /></ToolButton>
            </Group>
            <Group>
                <ToolButton $w={21} aria-label="소리"><Speaker /></ToolButton>
                <ToolButton $w={13} aria-label="소리 설정"><Down /></ToolButton>
            </Group>
            <Group><Badge>신</Badge><StockName>태경비케이</StockName></Group>
            <Group>
                {["일", "주", "월", "년"].map(t => <ToolButton key={t} $on={t === "일"}>{t}</ToolButton>)}
            </Group>
            <Group>
                {["분", "초", "틱"].map(t => <ToolButton key={t}>{t}</ToolButton>)}
            </Group>
            <Group>
                {[1, 3, 5, 10, 15, 30, 45, 60].map(t => <ToolButton key={t} $off $w={t > 9 ? 23 : 24}>{t}</ToolButton>)}
            </Group>
            <Group>
                <PickWrap><Pick $w={47} $off aria-label="분 단위"><option>10</option></Pick><Down c="#bbb" /></PickWrap>
            </Group>
            <Group><Field $w={36} $right defaultValue="160" aria-label="조회 개수" /></Group>
            <Total>/625</Total>
            <Group>
                <ToolButton aria-label="봉 추가"><svg width="18" height="18" fill="#555"><path d="M1 3h4v8H1zM3 0h1v14H3zM8 2h4v6H8zM10 0h1v11h-1zM12 11h2V8h2v3h2v2h-2v3h-2v-3h-2z" /></svg></ToolButton>
                <ToolButton aria-label="지표 추가"><svg width="18" height="18" fill="none" stroke="#666" strokeWidth="1.5"><path d="M0 8l5-4 4 4 7-7" /><path d="M13 9v8M9 13h8" strokeWidth="2.4" /></svg></ToolButton>
                <ToolButton aria-label="저장"><Save size={19} color="#555" /></ToolButton>
                <ToolButton aria-label="설정"><Gear /></ToolButton>
            </Group>
            <Group>
                <Field $w={78} defaultValue="2023/04/14" aria-label="기준일" $small />
                <ToolButton aria-label="달력"><Calendar size={16} color="#555" /></ToolButton>
            </Group>
        </Bar>
        <Bar $top={3} $gap={2}>
            <QuoteBox>
                <QuoteCell $w={215}>
                    <Num $w={40} $c={RED}>8,500</Num><Num $w={18} $c={RED}>▲</Num><Num $w={58} $c={RED}>240</Num><Num $w={60} $c={RED}>+2.91%</Num>
                </QuoteCell>
                <QuoteCell $w={214}>
                    <Num $w={68}>1,483,731</Num><Num $w={74} $c={RED}>101.65%</Num><Num $w={51}>5.38%</Num>
                </QuoteCell>
                <QuoteCell $w={102}><Num $w={90}>12,687백만</Num></QuoteCell>
                <QuoteCell $w={174} $pr={9}>
                    <Num $w={43}>최우선</Num><Num $w={56} $c={RED}>8,510</Num><Num $w={62} $c={RED}>8,500</Num>
                </QuoteCell>
                <QuoteCell $w={228} $pr={10}>
                    <Num $w={15}>시</Num><Num $w={50} $c={RED}>8,320</Num>
                    <Num $w={26}>고</Num><Num $w={50} $c={RED}>8,770</Num>
                    <Num $w={26}>저</Num><Num $w={50} $c={RED}>8,300</Num>
                </QuoteCell>
            </QuoteBox>
            <OrderButton>매수</OrderButton>
            <OrderButton $sell>매도</OrderButton>
        </Bar>
    </>
)

const Chart = () => (
    <ChartFrame>
        <Pane $h={424}>
            <PricePlot />
            <Axis viewBox="1792 150 81 424" preserveAspectRatio="none">
                <Ticks ys={priceRows} minor={priceRows.slice(1).map(y => y - 15)} />
                {prices.map((p, i) => <text key={i} x="1801" y={priceRows[i] + 4}>{p}</text>)}
                <rect x="1793" y="150" width="79" height="31" fill="#d5e1ef" />
                <text x="1793" y="164" fill={RED} fontSize="15">LC:69,66</text>
                <text x="1793" y="179" fill="#1450c8" fontSize="15">HC:-20,41</text>
                <rect x="1797" y="293" width="73" height="16" fill={RED} />
                <text x="1801" y="306" fill="#fff">8,500</text>
                <text x="1801" y="321" fill={RED}>2,91%</text>
            </Axis>
            <Legend>
                <Dot /><LegendItem $boxed $c="#333">태경비케이 매물대 수(10)</LegendItem>
                <Dot /><LegendItem $c="#0e9a84">전환선 9</LegendItem>
                <LegendItem $c="#787878">기준선 26</LegendItem>
                <LegendItem $c="#a020e0">후행스팬 26</LegendItem>
                <LegendItem $c="#f9a368">선행스팬1 9,26</LegendItem>
                <LegendItem $c="#6a8cf0">선행스팬2 52,26</LegendItem>
                <Dot /><LegendItem $small $c="#d40ce8">Bollinger Bands중심선 20,2</LegendItem>
                <LegendItem $c="#e60000">상한선</LegendItem>
            </Legend>
            <GridToggle aria-label="표 보기"><svg width="12" height="11" fill="none" stroke="#888"><path d="M1 1h10v9H1zM1 4h10M1 7h10M4 1v9M8 1v9" /></svg></GridToggle>
        </Pane>
        <Pane $h={169}>
            <Plot viewBox="8 575 1784 168" preserveAspectRatio="none">
                <Rules ys={[594, 623, 652, 680, 709, 738]} />
                <Months top={575} bottom={743} />
                <Line pts={obv} c="#ff6a00" />
                <Line pts={signal} c="#902c98" w={1.5} />
            </Plot>
            <Axis viewBox="1792 575 81 168" preserveAspectRatio="none">
                <Ticks ys={[594, 623, 652, 680, 709, 738]} minor={[580, 608, 637, 666, 695, 724]} />
                {["325", "300", "275", "250", "225"].map((t, i) => <text key={t} x="1801" y={Math.round(598 + i * 28.75)}>{t},000K</text>)}
            </Axis>
            <Legend><Dot /><LegendItem $c="#ff6a00">OBV</LegendItem><LegendItem $c="#902c98">Signal 9</LegendItem></Legend>
            <ClosePane aria-label="OBV 닫기"><svg width="10" height="9" stroke="#fff"><path d="M3 3l4 3M7 3L3 6" /></svg></ClosePane>
        </Pane>
        <Pane $h={131}>
            <Plot viewBox="8 744 1784 130" preserveAspectRatio="none">
                <Rules ys={[807, 857]} />
                <Months top={744} bottom={874} />
                <Line pts={intensity} c="#ff6a00" />
            </Plot>
            <Axis viewBox="1792 744 81 130" preserveAspectRatio="none">
                <Ticks ys={[807, 857]} minor={[767, 787, 797, 817, 827, 837]} />
                <text x="1801" y="811">40,000M</text>
                <text x="1801" y="861">20,000M</text>
            </Axis>
            <Legend><Dot /><LegendItem $small $c="#ff6a00">Bostian's Intraday Intensity Index</LegendItem></Legend>
            <ClosePane aria-label="지표 닫기"><svg width="10" height="9" stroke="#fff"><path d="M3 3l4 3M7 3L3 6" /></svg></ClosePane>
        </Pane>
        <DateRow $h={23}>
            <Plot viewBox="8 875 1784 22" preserveAspectRatio="none" fill="#4a4a4a">
                <Months top={875} bottom={897} c="#999" />
                <text x="10" y="889">2022/09</text>
                {months.map(([x, t]) => <text key={x} x={x + 2} y="889">{t}</text>)}
            </Plot>
            <Axis viewBox="1792 875 81 22" preserveAspectRatio="none"><text x="1801" y="889">04/14</text></Axis>
        </DateRow>
    </ChartFrame>
)

const ScrollBar = () => (
    <ScrollRow>
        <PlayButton aria-label="왼쪽"><svg width="6" height="10"><path d="M6 0v10L0 5z" /></svg></PlayButton>
        <Track><Thumb /></Track>
        <PlayButton aria-label="오른쪽"><svg width="6" height="10"><path d="M0 0v10l6-5z" /></svg></PlayButton>
        <PlayButton aria-label="뒤로"><svg width="11" height="10"><path d="M5 0v10L0 5zM11 0v10L6 5z" /></svg></PlayButton>
        <PlayButton aria-label="정지"><svg width="9" height="9"><path d="M0 0h9v9H0z" /></svg></PlayButton>
        <PlayButton aria-label="앞으로"><svg width="11" height="10"><path d="M0 0v10l5-5zM6 0v10l5-5z" /></svg></PlayButton>
        <Speed min="0" max="10" defaultValue="3" aria-label="재생 속도" />
        <ChartTools>
            {bottomTools.map(([name, shape, on], i) => (
                <ChartTool key={name} aria-label={name} $on={on}>
                    {i < 9 ? <svg width="19" height="19" fill="none" stroke="#777" strokeWidth="1.2">{shape}</svg> : shape}
                </ChartTool>
            ))}
            <ChartTool>A</ChartTool>
        </ChartTools>
    </ScrollRow>
)

const r = "#e03028"
const n = "#1414c8"

const Footer = () => (
    <>
        <TabBar>
            <CloseStrip>×</CloseStrip>
            {tabs.map((t, i) => (
                <Tab href="#" key={i} $on={i === 6}><TabNo $web={i === 9}>{i === 9 ? "e" : 1}</TabNo>{t}</Tab>
            ))}
            <TabEnd>
                <TabEndButton aria-label="내리기"><svg width="12" height="16" fill="#555"><path d="M4 0h4v6h4l-6 6-6-6h4zM2 14h8v2H2z" /></svg></TabEndButton>
                <TabEndButton $line aria-label="차트 화면"><svg width="18" height="16"><path d="M1 1h16v14H1z" fill="#eafafa" stroke="#666" /><path d="M2 12l5-6 3 3 5-6v11H2z" fill="#30b0b0" /></svg></TabEndButton>
            </TabEnd>
        </TabBar>
        <Tickers>
            <CloseStrip $blue>×</CloseStrip>
            <TickerRows>
                <TickerRow>
                    <Quote>
                        <TickerName>KOSPI200</TickerName>
                        <Value $w={64} $c={r}>333.68</Value><Value $w={21} $c={r}>▲</Value><Value $w={47} $c={r}>0.59</Value><Value $w={55} $c={r}>0.18%</Value><Value>298,774</Value>
                        <DropArrow aria-label="지수 선택"><Down /></DropArrow>
                    </Quote>
                    <Quote>
                        <TickerName>KOSDAQ종합</TickerName>
                        <Value $w={64} $c={r}>903.84</Value><Value $w={21} $c={r}>▲</Value><Value $w={47} $c={r}>9.59</Value><Value $w={55} $c={r}>1.07%</Value><Value>1,463,220</Value>
                        <DropArrow aria-label="지수 선택"><Down /></DropArrow>
                    </Quote>
                    <News>
                        <Headline href="#">"목사님 타락했다"…전광훈도 "국민의힘과 결별" 손절 예고</Headline>
                        <NewsCell $w={76}>10:23:14</NewsCell>
                        <NewsCell $w={74}>한국경제</NewsCell>
                        <NewsCell $w={29}><Down /></NewsCell>
                        <NewsCell $w={110}><Speaker />신호대기</NewsCell>
                    </News>
                </TickerRow>
                <TickerRow>
                    <Quote>
                        <TickerName>KOSDAQ등락</TickerName>
                        <Value $w={97} $c={r}>▲967(↑5)</Value><Value $w={39}>75</Value><Value $c={n}>▼521(↓0)</Value>
                        <DropArrow aria-label="지수 선택"><Down /></DropArrow>
                    </Quote>
                    <Quote>
                        <TickerName>DOWJONES</TickerName>
                        <Value $w={87} $c={n}>33,886.47</Value><Value $w={75} $c={n}>▼143.22</Value><Value $w={62} $c={n}>-0.42%</Value><Value>276,721,330</Value>
                        <DropArrow aria-label="지수 선택"><Down /></DropArrow>
                    </Quote>
                    <News>
                        <Headline href="#">업데이트 1-일본의 키시다는 G7 정상회담 동안 안전을 보장하기 위해 최선을 다할 것을 맹세한다</Headline>
                        <NewsCell $w={76}>10:15:03</NewsCell>
                        <NewsCell $w={89}>로이터뉴스</NewsCell>
                        <NewsCell $w={27}><Down /></NewsCell>
                        <NewsCell $w={24}><Gear c="#777" /></NewsCell>
                        <NewsCell $w={47} $pad={6} $line>체결</NewsCell>
                        <NewsCell $w={41} $pad={5} $line>감시</NewsCell>
                    </News>
                </TickerRow>
            </TickerRows>
        </Tickers>
    </>
)

const WinTaskbar = () => (
    <Taskbar>
        <TaskButton aria-label="위젯"><svg width="30" height="28"><rect width="30" height="28" rx="2" fill="#0a64b4" /><path d="M2 3h12v22H2z" fill="#f4f6fa" /><path d="M16 3h12v12H16z" fill="#5cd0fa" /><path d="M16 16h12v4H16z" fill="#1aa0f0" /><path d="M16 21h12v4H16z" fill="#0a84e0" /></svg></TaskButton>
        <TaskIcons>
            <TaskButton $w={30} aria-label="시작"><svg width="29" height="29"><path d="M0 0h14v14H0z" fill="#7ae8fc" /><path d="M15 0h14v14H15z" fill="#4cc8f8" /><path d="M0 15h14v14H0z" fill="#4cc8f8" /><path d="M15 15h14v14H15z" fill="#1a9cf4" /></svg></TaskButton>
            <SearchPill>
                <Search size={20} />
                <input placeholder="검색" aria-label="검색" />
                <svg width="60" height="32" viewBox="0 0 60 32">
                    <ellipse cx="14" cy="12" rx="10" ry="10" fill="#a8a4d0" />
                    <ellipse cx="14" cy="20" rx="14" ry="5" transform="rotate(-25 14 20)" fill="#8480b4" />
                    <path d="M4 16l18-8" stroke="#3c3860" strokeWidth="3" />
                    <path d="M24 31L35 7c1-5-5-5-6-1" stroke="#d8a060" strokeWidth="3" fill="none" />
                    <path d="M42 6c4-4 15 0 14 5s-8 5-9 2z" stroke="#aca8d4" strokeWidth="3" fill="none" />
                    <path d="M45 14l5 2-2 14-6-5z" fill="#9490c4" />
                </svg>
            </SearchPill>
            <TaskButton aria-label="작업 보기"><svg width="30" height="28"><path d="M8 0h22v20H8z" fill="#f2f2f2" /><path d="M0 8h22v20H0z" fill="#777" opacity=".8" /></svg></TaskButton>
            <TaskButton aria-label="채팅"><svg width="30" height="30"><path d="M15 1a14 14 0 1 1-7 26l-6 2 1-7A14 14 0 0 1 15 1z" fill="#6a5cd0" /><g transform="translate(6 6)"><Video size={18} color="#fff" fill="#fff" /></g></svg></TaskButton>
            <TaskButton aria-label="파일 탐색기"><svg width="30" height="28"><path d="M0 3q0-3 3-3h8l3 4h13q3 0 3 3v20H0z" fill="#e8a020" /><path d="M0 8h30v20H0z" fill="#fccc54" /><path d="M5 28v-5q0-3 3-3h14q3 0 3 3v5z" fill="#1470c4" /></svg></TaskButton>
            <TaskButton $run aria-label="Edge">
                <svg width="31" height="31" viewBox="0 0 31 31">
                    <defs><linearGradient id="edge" x1="0" x2="1"><stop offset="0" stopColor="#2ab4ec" /><stop offset="1" stopColor="#5cdc60" /></linearGradient></defs>
                    <circle cx="15.5" cy="15.5" r="15" fill="#0c6cc0" />
                    <path d="M1 15C1 0 30-4 30 14c0 7-11 8-12 4 4-6-2-10-8-8-5 1-8 5-9 5z" fill="url(#edge)" />
                    <path d="M10 17c0 8 9 12 17 8-4 6-13 7-18 3-5-5-3-12 3-15-1 1-2 3-2 4z" fill="#084c94" />
                    <path d="M18 18c1 3 7 3 11 0-2 4-9 6-13 2-1-2 0-5 2-5z" fill="#142834" />
                </svg>
            </TaskButton>
            <TaskButton aria-label="스토어"><svg width="30" height="30"><path d="M9 7V2h12v5" fill="none" stroke="#30a8e8" strokeWidth="2.5" /><rect y="6" width="30" height="24" rx="4" fill="#f4f4f4" /><path d="M9 12h5v5H9z" fill="#f05020" /><path d="M16 12h5v5h-5z" fill="#70b818" /><path d="M9 19h5v5H9z" fill="#18a0e8" /><path d="M16 19h5v5h-5z" fill="#fcb810" /></svg></TaskButton>
            <TaskButton aria-label="빠른 검색"><svg width="30" height="30"><circle cx="15" cy="15" r="15" fill="#1c34b0" /><path d="M17 9a6.500 6.500 0 1 0 1 10l4 4" stroke="#fff" strokeWidth="2" fill="none" /><path d="M14 10h10M14 14h9M14 17h6" stroke="#fff" strokeWidth="1.5" /></svg></TaskButton>
            <TaskButton aria-label="공유"><svg width="30" height="30"><circle cx="15" cy="15" r="15" fill="#6450c8" /><circle cx="15" cy="15" r="9" fill="none" stroke="#c8bcf0" strokeWidth="1.5" /><g transform="translate(8 8)"><ArrowRight size={14} color="#fff" /></g></svg></TaskButton>
            <TaskButton aria-label="빅스비"><svg width="30" height="30"><defs><linearGradient id="bix" y2="1"><stop stopColor="#30b4e8" /><stop offset="1" stopColor="#5c7cf0" /></linearGradient></defs><circle cx="15" cy="15" r="15" fill="url(#bix)" /><path d="M10 7v10a5 5 0 1 0 5-5" stroke="#fff" strokeWidth="4" fill="none" /></svg></TaskButton>
            <TaskButton $on aria-label="영웅문"><ActiveTile><svg width="30" height="29"><path d="M0 0h30v29H0z" fill="#fff" /><path d="M2 6l9-2M6 2L3 11l5 2M11 3L7 20M13 6v14M9 10l7-2M10 14l6-1M10 19l6-2" stroke="#d81c20" strokeWidth="1.8" fill="none" /><path d="M17 7l10-3M20 3l1 7M25 1l-2 8M18 12l9-3-1 6-8 2zM22 10l-2 11-5 6M16 19l12-3M21 17l7 11" stroke="#d81c20" strokeWidth="2.2" fill="none" /></svg></ActiveTile></TaskButton>
            <TaskButton $run aria-label="카카오톡"><svg width="30" height="30"><path d="M0 0h30v30H0z" fill="#fce200" /><path d="M15 4c7 0 12 4 12 9s-5 9-11 9l-5 4 1-4.500C7 20 3 17 3 13c0-5 5-9 12-9z" fill="#3c2020" /><text x="15" y="16" fontSize="8" fontWeight="700" fill="#fce200" textAnchor="middle">TALK</text></svg></TaskButton>
        </TaskIcons>
        <Tray>
            <ChevronUp size={18} />
            <TrayText $w={30}><Cloud size={22} fill="#ddd" color="#ddd" /></TrayText>
            <TrayText $w={32}><svg width="30" height="20"><Mic size={17} color="#58c4e8" /><g transform="translate(13 5)"><Send size={14} color="#58c4e8" /></g></svg></TrayText>
            <TrayText $w={36}>가</TrayText>
            <TrayText $w={34}>한</TrayText>
            <Wifi size={20} />
            <Volume2 size={20} strokeWidth={1.6} />
            <svg width="20" height="14" fill="none" stroke="#fff" strokeWidth="1.6"><rect x="1" y="1" width="15" height="12" rx="3" /><path d="M18 5v4" /><path d="M4 4h3v6H4z" fill="#fff" stroke="none" /></svg>
            <Clock>오전 10:23<br />2023-04-16</Clock>
        </Tray>
    </Taskbar>
)

const App = () => {
    return (
        <Screen>
            <GlobalStyle />
            <AppWindow>
                <Header />
                <Work>
                    <Main>
                        <Toolbar />
                        <Chart />
                        <ScrollBar />
                    </Main>
                    <Palette>
                        <Grip />
                        <PaletteGrid>
                            {paletteIcons.map(([name, ...parts]) => (
                                <PaletteButton key={name} aria-label={name}><svg width="25" height="25" viewBox="0 0 25 25">{parts}</svg></PaletteButton>
                            ))}
                        </PaletteGrid>
                    </Palette>
                </Work>
                <Footer />
            </AppWindow>
            <WinTaskbar />
        </Screen>
    )
}

export default App
